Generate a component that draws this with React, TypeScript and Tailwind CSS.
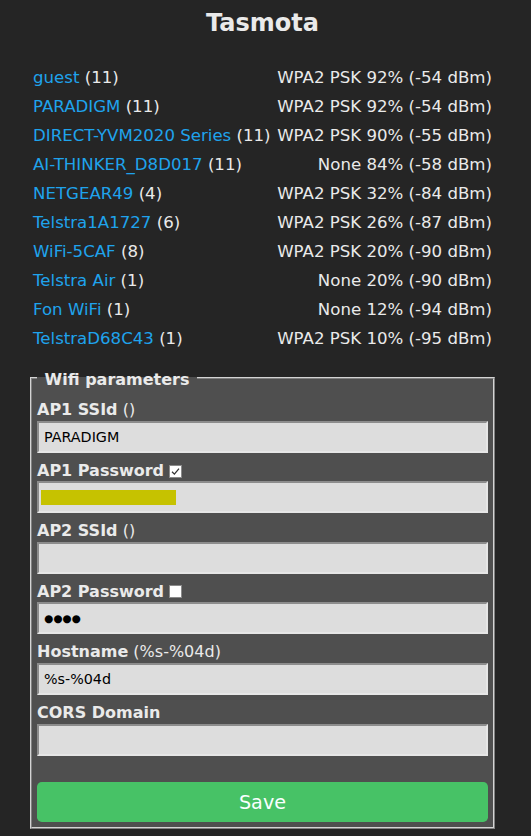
import { useState } from "react";

const networks = [
  { ssid: "guest", ch: 11, info: "WPA2 PSK 92% (-54 dBm)" },
  { ssid: "PARADIGM", ch: 11, info: "WPA2 PSK 92% (-54 dBm)" },
  { ssid: "DIRECT-YVM2020 Series", ch: 11, info: "WPA2 PSK 90% (-55 dBm)" },
  { ssid: "AI-THINKER_D8D017", ch: 11, info: "None 84% (-58 dBm)" },
  { ssid: "NETGEAR49", ch: 4, info: "WPA2 PSK 32% (-84 dBm)" },
  { ssid: "Telstra1A1727", ch: 6, info: "WPA2 PSK 26% (-87 dBm)" },
  { ssid: "WiFi-5CAF", ch: 8, info: "WPA2 PSK 20% (-90 dBm)" },
  { ssid: "Telstra Air", ch: 1, info: "None 20% (-90 dBm)" },
  { ssid: "Fon WiFi", ch: 1, info: "None 12% (-94 dBm)" },
  { ssid: "TelstraD68C43", ch: 1, info: "WPA2 PSK 10% (-95 dBm)" },
];

function Check({ checked, onClick }: { checked: boolean; onClick: () => void }) {
  return (
    <span
      onClick={onClick}
      className="ml-[5px] inline-flex h-[13px] w-[13px] cursor-pointer items-center justify-center border border-[#8a8a8a] bg-white align-[-1px]"
    >
      {checked && (
        <svg viewBox="0 0 12 12" className="h-[11px] w-[11px]">
          <path d="M2.2 6.3 L4.8 8.9 L9.8 2.8" fill="none" stroke="#333" strokeWidth="1.4" />
        </svg>
      )}
    </span>
  );
}

function Field({ children }: { children: React.ReactNode }) {
  return <div className="my-2">{children}</div>;
}

const inputCls =
  "block h-[32px] w-full border-2 border-t-[#8c8c8c] border-l-[#8c8c8c] border-b-[#e6e6e6] border-r-[#e6e6e6] bg-[#dddddd] px-[5px] text-black outline-none [font-family:'DejaVu_Sans',Verdana,sans-serif]";

export default function App() {
  const [show1, setShow1] = useState(true);
  const [show2, setShow2] = useState(false);

  return (
    <div className="min-h-[836px] bg-[#252525] pt-[9px] text-[16px] leading-[19px] text-[#eaeaea] [font-family:'DejaVu_Sans',Verdana,sans-serif]">
      <div className="ml-[28px] w-[469px]">
        <h2 className="mb-[26px] text-center text-[24px] font-bold leading-[28px]">Tasmota</h2>

        <div className="text-[16.6px]">
          {networks.map((n) => (
            <div key={n.ssid} className="flex justify-between whitespace-nowrap p-[5px]">
              <span>
                <a href="#p" className="text-[#1fa3ec]">
                  {n.ssid}
                </a>
                {"\u00a0(" + n.ch + ")\u00a0"}
              </span>
              <span>{n.info}</span>
            </div>
          ))}
        </div>

        <fieldset className="mx-[2px] mt-[15px] border-2 border-[#d4d4d4] [border-style:ridge] bg-[#4f4f4f] px-[5px] pb-[5px] pt-[5px]">
          <legend className="px-[2px] font-bold leading-[19px]">
            <span className="relative top-[2px]">{"\u00a0Wifi parameters\u00a0"}</span>
          </legend>
          <form onSubmit={(e) => e.preventDefault()}>
            <Field>
              <div className="leading-[20.6px]">
                <b>AP1 SSId</b> ()
              </div>
              <input className={inputCls + " text-[14.3px]"} defaultValue="PARADIGM" />
            </Field>
            <Field>
              <div className="leading-[20.6px]">
                <b>AP1 Password</b>
                <Check checked={show1} onClick={() => setShow1(!show1)} />
              </div>
              <div className="relative">
                <input className={inputCls + " text-[14.3px]"} type={show1 ? "text" : "password"} defaultValue="" />
                <span className="absolute left-[4px] top-[9px] h-[15px] w-[135px] bg-[#c6c200]" />
              </div>
            </Field>
            <Field>
              <div className="leading-[20.6px]">
                <b>AP2 SSId</b> ()
              </div>
              <input className={inputCls + " text-[14.3px]"} defaultValue="" />
            </Field>
            <Field>
              <div className="leading-[20.6px]">
                <b>AP2 Password</b>
                <Check checked={show2} onClick={() => setShow2(!show2)} />
              </div>
              <input
                className={inputCls + (show2 ? " text-[14.3px]" : " text-[10.5px]")}
                readOnly
                value={show2 ? "****" : "\u25cf\u25cf\u25cf\u25cf"}
              />
            </Field>
            <Field>
              <div className="leading-[20.6px]">
                <b>Hostname</b> (%s-%04d)
              </div>
              <input className={inputCls + " text-[14.3px]"} defaultValue="%s-%04d" />
            </Field>
            <Field>
              <div className="leading-[20.6px]">
                <b>CORS Domain</b>
              </div>
              <input className={inputCls + " text-[14.3px]"} defaultValue="" />
            </Field>
            <div className="h-[18px]" />
            <button
              type="submit"
              className="block h-[40px] w-full cursor-pointer rounded-[0.3rem] bg-[#47c266] text-[19.2px] leading-[42px] text-[#faffff]"
            >
              Save
            </button>
          </form>
        </fieldset>
      </div>
    </div>
  );
}
